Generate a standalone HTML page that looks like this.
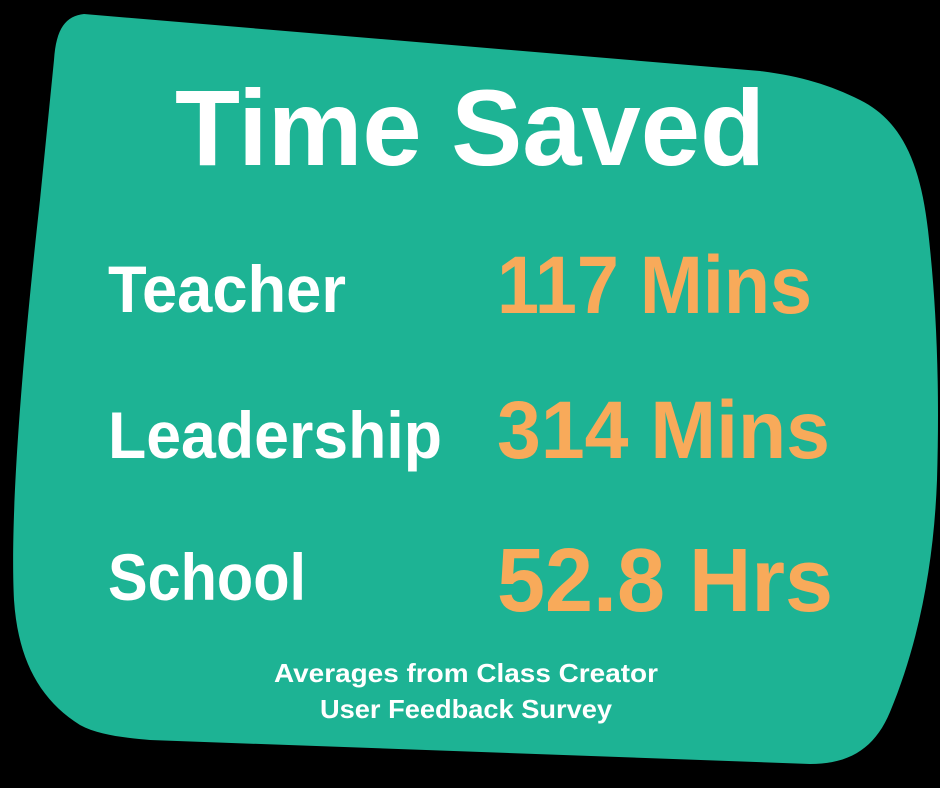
<!DOCTYPE html>
<html><head><style>
html,body{margin:0;padding:0;background:#000;width:940px;height:788px;overflow:hidden}
svg{display:block}
text{font-family:"Liberation Sans",sans-serif;font-weight:bold}
</style></head><body>
<svg width="940" height="788" viewBox="0 0 940 788">
<rect width="940" height="788" fill="#000"/>
<path d="M84,14 C66,16 56,28 54,60 L40,200 C20,380 10,520 14,600 C18,660 40,700 80,725 C100,736 130,738 150,740 L810,764 C850,764 875,748 890,712 C920,640 934,560 937,480 C940,380 936,300 928,230 C920,160 900,120 860,100 C830,85 800,76 760,71 Z" fill="#1db394"/>
<g fill="#fff">
<text x="175" y="165" font-size="108" textLength="590" lengthAdjust="spacingAndGlyphs">Time Saved</text>
<text x="108" y="312" font-size="66" textLength="238" lengthAdjust="spacingAndGlyphs">Teacher</text>
<text x="108" y="458" font-size="66" textLength="334" lengthAdjust="spacingAndGlyphs">Leadership</text>
<text x="108" y="600" font-size="66" textLength="198" lengthAdjust="spacingAndGlyphs">School</text>
<text x="466" y="682" font-size="26" text-anchor="middle" textLength="384" lengthAdjust="spacingAndGlyphs">Averages from Class Creator</text>
<text x="466" y="718" font-size="26" text-anchor="middle" textLength="292" lengthAdjust="spacingAndGlyphs">User Feedback Survey</text>
</g>
<g fill="#f8aa5a">
<text x="497" y="313" font-size="82" textLength="315" lengthAdjust="spacingAndGlyphs">117 Mins</text>
<text x="497" y="458" font-size="82" textLength="333" lengthAdjust="spacingAndGlyphs">314 Mins</text>
<text x="497" y="611" font-size="90" textLength="336" lengthAdjust="spacingAndGlyphs">52.8 Hrs</text>
</g>
</svg>
</body></html>
